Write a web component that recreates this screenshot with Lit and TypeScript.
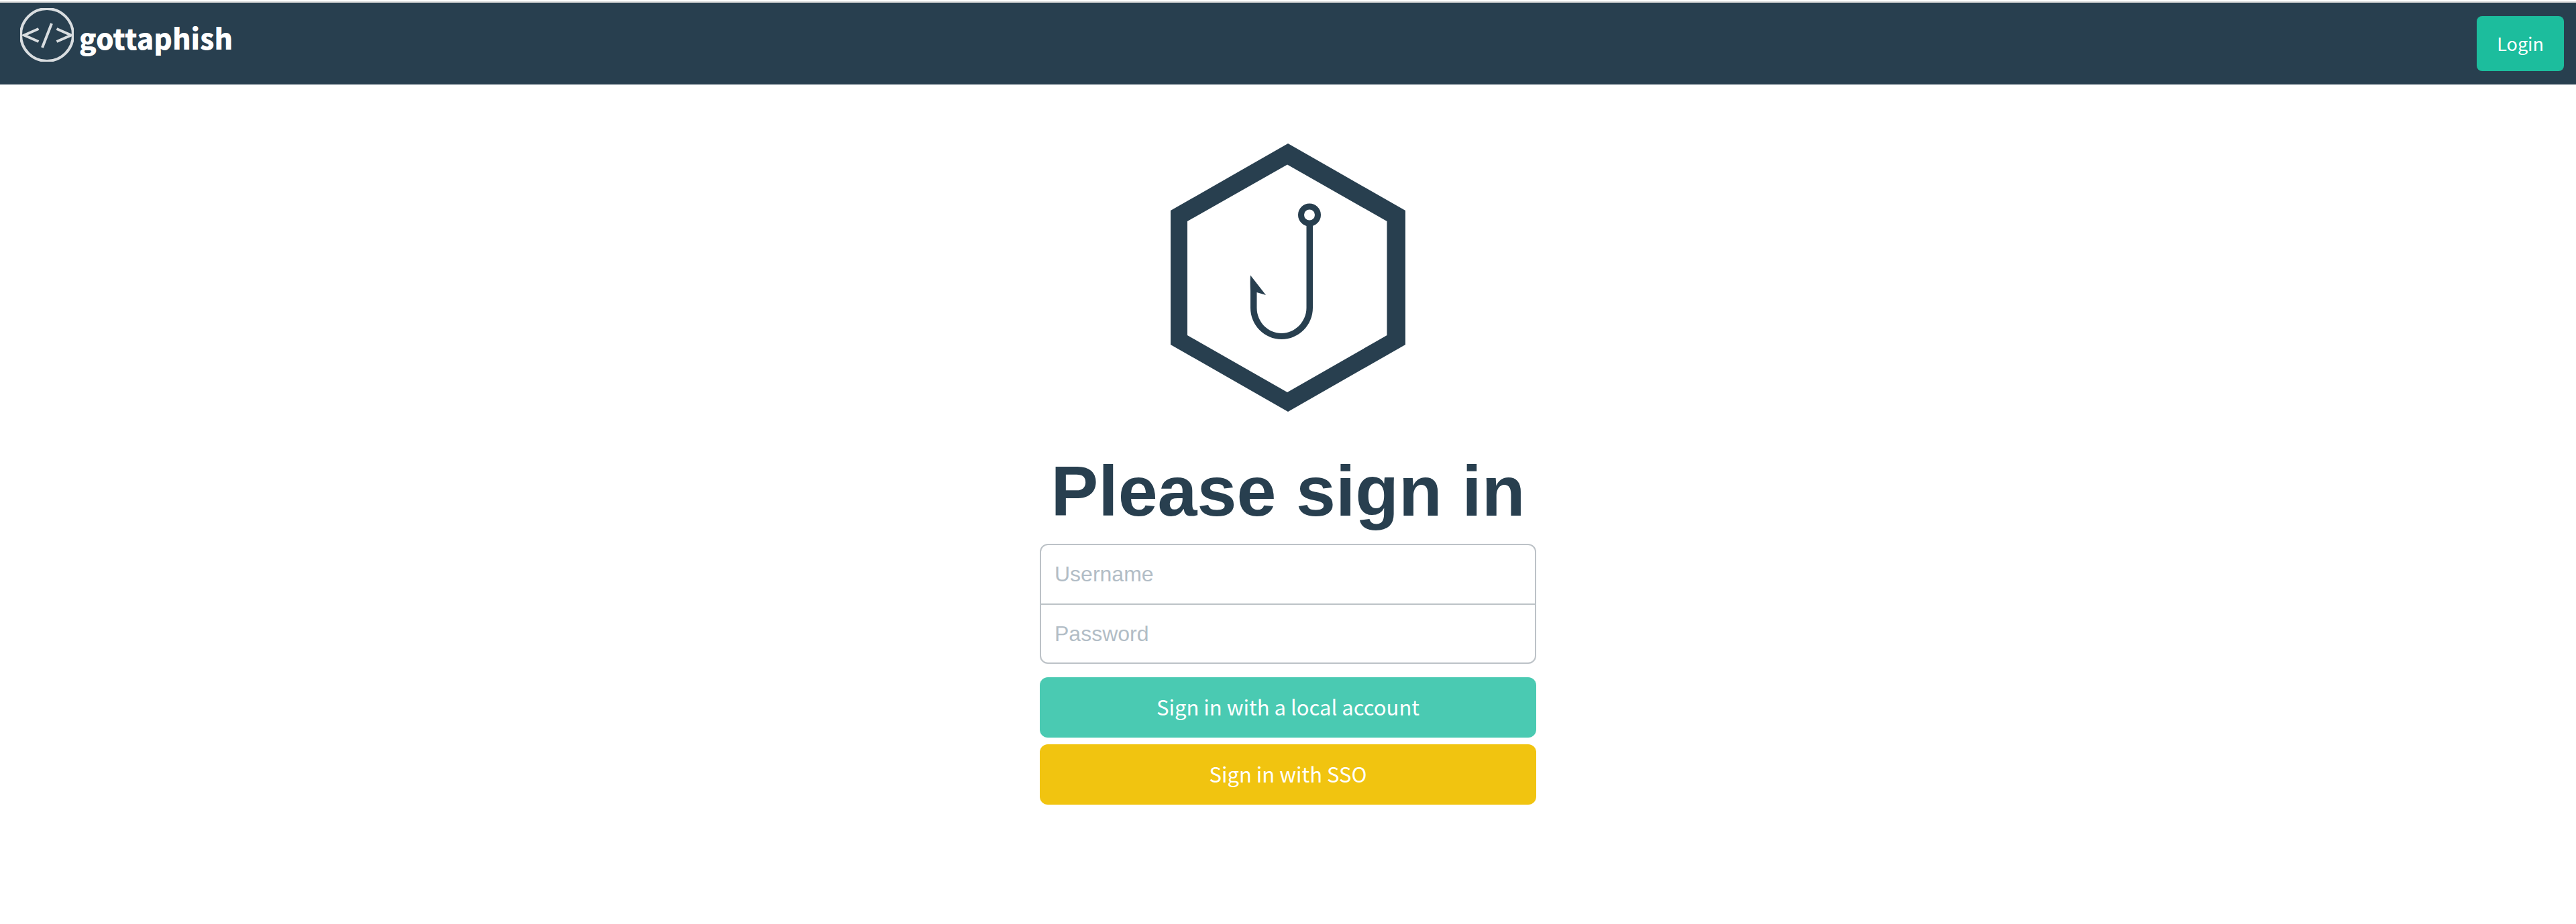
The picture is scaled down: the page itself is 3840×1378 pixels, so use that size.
import { LitElement, html, css } from "lit";
import { customElement } from "lit/decorators.js";

@customElement("brand-mark")
class BrandMark extends LitElement {
  static styles = css`
    :host { display: block; flex: none; }
    .mark { display: block; width: 80px; height: 80px; }
  `;
  render() {
    return html`
      <svg class="mark" viewBox="0 0 80 80" fill="none" stroke="#d9dde0" stroke-width="4" aria-hidden="true">
        <circle cx="40" cy="40" r="39"></circle>
        <path d="M27.500 31 6 40.500 27.500 50M54.500 31 76 40.500 54.500 50M47 23 33 59"></path>
      </svg>
    `;
  }
}

@customElement("hook-logo")
class HookLogo extends LitElement {
  static styles = css`
    :host { display: block; }
    .logo { display: block; width: 350px; height: 400px; }
  `;
  render() {
    return html`
      <svg class="logo" viewBox="0 0 350 400" fill="#283f4f" role="img" aria-label="gottaphish logo">
        <path
          fill-rule="evenodd"
          d="M175 0 350 100V300L175 400 0 300V100ZM174 31.500 25 116V286L174 371 322.500 286V116Z"
        ></path>
        <circle cx="207" cy="106.500" r="12.500" fill="none" stroke="#283f4f" stroke-width="9"></circle>
        <path
          d="M202.500 121V245C202.500 266 185 283 165.500 283C145 283 128.500 266 128.500 245V222L142 226 119 196.500C118.500 203 118.500 212 119 220V245C119 271 140 292 165.500 292C191 292 212 271 212 245V121Z"
        ></path>
      </svg>
    `;
  }
}

@customElement("app-root")
class AppRoot extends LitElement {
  static styles = css`
    :host {
      display: block;
      background: #ffffff;
      color: #283f4f;
      font-family: "Noto Sans CJK SC", "Noto Sans", sans-serif;
    }
    .navbar {
      display: flex;
      justify-content: space-between;
      align-items: flex-start;
      box-sizing: border-box;
      min-height: 124px;
      margin-top: 2px;
      border-top: 2px solid #dadada;
      padding: 8px 18px 20px 30px;
      background: #283f4f;
    }
    .brand {
      display: flex;
      align-items: flex-start;
      gap: 8px;
      color: #ffffff;
      text-decoration: none;
      font-size: 42px;
      font-weight: 900;
      line-height: 88px;
    }
    .login {
      margin-top: 12px;
      padding: 20px 30px;
      border-radius: 8px;
      background: #1cbd9d;
      color: #ffffff;
      text-decoration: none;
      font-size: 27px;
      line-height: 42px;
    }
    .content {
      display: flex;
      flex-direction: column;
      align-items: center;
      padding: 88px 20px 100px;
    }
    .title {
      margin: 58px 0 18px;
      font-family: "Liberation Sans", Arial, sans-serif;
      font-size: 106px;
      font-weight: 700;
      line-height: 121px;
    }
    .form {
      display: flex;
      flex-direction: column;
      width: 100%;
      max-width: 740px;
    }
    .fields {
      display: flex;
      flex-direction: column;
      margin-bottom: 20px;
      border: 2px solid #bcc2c7;
      border-radius: 12px;
      overflow: hidden;
    }
    .field {
      box-sizing: border-box;
      width: 100%;
      height: 87px;
      margin: 0;
      border: 0;
      padding: 0 20px;
      outline: none;
      background: transparent;
      color: #283f4f;
      font-family: "Liberation Sans", Arial, sans-serif;
      font-size: 32px;
    }
    .field + .field { border-top: 2px solid #bcc2c7; height: 88px; }
    .field::placeholder { color: #b2bdc6; opacity: 1; }
    .button {
      height: 90px;
      border: 0;
      border-radius: 12px;
      padding: 0 20px 2px;
      color: #ffffff;
      font-family: inherit;
      font-size: 31px;
      line-height: 48px;
    }
    .button + .button { margin-top: 10px; }
    .local { background: #4acab2; }
    .sso { background: #f1c410; }
  `;
  render() {
    return html`
      <nav class="navbar">
        <a class="brand" href="#"><brand-mark></brand-mark>gottaphish</a>
        <a class="login" href="#login">Login</a>
      </nav>
      <main class="content">
        <hook-logo></hook-logo>
        <h1 class="title">Please sign in</h1>
        <form class="form">
          <div class="fields">
            <input class="field" type="text" name="username" placeholder="Username" aria-label="Username" />
            <input class="field" type="password" name="password" placeholder="Password" aria-label="Password" />
          </div>
          <button class="button local" type="submit">Sign in with a local account</button>
          <button class="button sso" type="button">Sign in with SSO</button>
        </form>
      </main>
    `;
  }
}
